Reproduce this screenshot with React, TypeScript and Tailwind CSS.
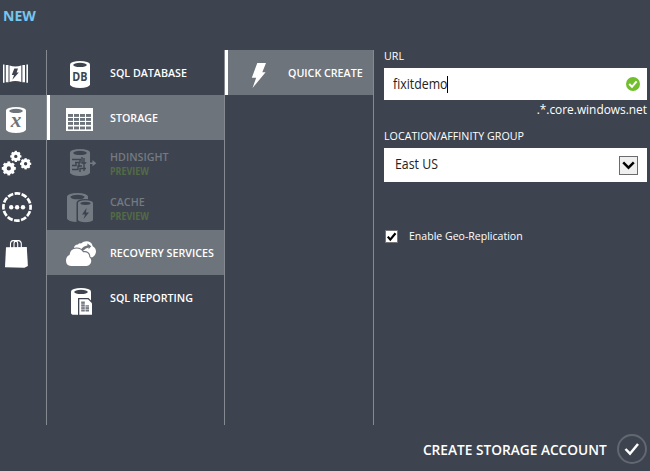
import React from "react";

const BG = "#3e444f";
const HI = "#6e747c";

type CylinderProps = { x: number; y: number; w: number; h: number; fill: string; hole: string };

function Cylinder({ x, y, w, h, fill, hole }: CylinderProps) {
  const r = w / 2;
  const e = w * 0.17;
  return (
    <>
      <path
        d={`M${x} ${y + e}A${r} ${e} 0 0 1 ${x + w} ${y + e}V${y + h - e}A${r} ${e} 0 0 1 ${x} ${y + h - e}Z`}
        fill={fill}
      />
      <ellipse cx={x + r} cy={y + e + 0.5} rx={r * 0.68} ry={e * 0.62} fill={hole} />
    </>
  );
}

function Gear({ cx, cy, r }: { cx: number; cy: number; r: number }) {
  return (
    <>
      <circle cx={cx} cy={cy} r={r * 0.57} fill="none" stroke="white" strokeWidth={r * 0.54} />
      {[0, 45, 90, 135, 180, 225, 270, 315].map((a) => (
        <rect
          key={a}
          x={cx - r * 0.2}
          y={cy - r}
          width={r * 0.4}
          height={r * 0.4}
          fill="white"
          transform={`rotate(${a} ${cx} ${cy})`}
        />
      ))}
    </>
  );
}

function RailIcon({ top, children }: { top: number; children: React.ReactNode }) {
  return (
    <svg className="block h-[45px] w-[46px]" viewBox={`0 ${top} 46 45`}>
      {children}
    </svg>
  );
}

function Rail() {
  return (
    <nav className="flex h-[375px] w-[47px] shrink-0 flex-col border-r border-[#858a91]">
      <RailIcon top={50}>
        <path d="M3 64.5h1.5v18.3H3zM5.8 65h2.7v17.3H5.8zM22.4 65H25v17.3h-2.6zM26.4 64.5H28v18.3h-1.6z" fill="white" />
        <path d="M9.5 65.5Q15.4 67.5 21.3 65.5V82Q15.4 80 9.5 82Z" fill="white" />
        <path d="M14.3 68.5H18L16.6 72.4H18.8L12.4 79.7L14 75H11.8Z" fill={BG} />
      </RailIcon>
      <div className="bg-[#6e747c]">
        <RailIcon top={95}>
          <Cylinder x={6} y={107} w={20} h={26} fill="white" hole={HI} />
          <text x="10.8" y="126.8" textLength="10.6" lengthAdjust="spacingAndGlyphs" fontFamily="Liberation Serif, serif" fontWeight="bold" fontStyle="italic" fontSize="21" fill={HI}>
            x
          </text>
        </RailIcon>
      </div>
      <RailIcon top={140}>
        <Gear cx={8.8} cy={168.4} r={7} />
        <Gear cx={15.8} cy={156.4} r={5.6} />
        <Gear cx={25.6} cy={163.8} r={5.6} />
      </RailIcon>
      <RailIcon top={185}>
        <circle cx="17" cy="207" r="13.6" fill="none" stroke="white" strokeWidth="2.7" strokeDasharray="5.7 1.42" strokeDashoffset="2.85" />
        <circle cx="11.2" cy="207.2" r="2.2" fill="white" />
        <circle cx="17.1" cy="207.2" r="2.2" fill="white" />
        <circle cx="23" cy="207.2" r="2.2" fill="white" />
      </RailIcon>
      <RailIcon top={230}>
        <path d="M6 247.3L26.8 247L27.9 266L24.5 267.8L5 267.2Z" fill="white" />
        <path d="M10.5 248V243.5Q10.7 240.7 13 240.6H15.5Q17.5 241 17.7 243.5V248M14 248V243.5Q14.3 240.8 16.4 240.6H18.5Q21 240.7 21.3 243.5V248" fill="none" stroke="white" strokeWidth="1.1" />
      </RailIcon>
    </nav>
  );
}

type ItemProps = { top: number; icon: React.ReactNode; label: string; active?: boolean; bar?: boolean; preview?: boolean };

function Item({ top, icon, label, active, bar, preview }: ItemProps) {
  return (
    <li className={`flex h-[45px] ${active ? "bg-[#6e747c]" : ""} ${preview ? "text-[#747a82]" : "text-white"}`}>
      <div className={`w-[3px] shrink-0 ${bar ? "bg-white" : ""}`} />
      <svg className="block h-[45px] w-[60px] shrink-0" viewBox={`50 ${top} 60 45`}>
        {icon}
      </svg>
      <div className={`flex flex-col whitespace-nowrap text-[11.5px] leading-[15px] font-semibold ${preview ? "pt-[9px]" : "pt-[15px]"}`}>
        <span className="origin-left scale-x-[0.93]">{label}</span>
        {preview && <span className="origin-left scale-x-[0.89] text-[10px] leading-[14px] font-bold text-[#526b46]">PREVIEW</span>}
      </div>
    </li>
  );
}

const GREY = "#747a82";

const dbIcon = (
  <>
    <Cylinder x={70} y={61} w={20} h={27} fill="white" hole={BG} />
    <text x="72.2" y="81" textLength="15.2" lengthAdjust="spacingAndGlyphs" fontSize="11.5" fontWeight="bold" fill={BG}>
      DB
    </text>
  </>
);

const tableIcon = (
  <>
    <path d="M66 108h27v23H66z" fill="white" />
    {[114, 118, 122, 126.5].map((y) =>
      [68, 74, 80, 86].map((x) => <rect key={`${x}-${y}`} x={x} y={y} width="5" height="2.9" fill={HI} />),
    )}
  </>
);

const insightIcon = (
  <>
    <Cylinder x={70} y={149} w={20} h={27} fill={GREY} hole={BG} />
    <path d="M72 159.5H81M75 162.5H80V159M72 165.5H76V162.5M72 169.5H78V166H82M80 172V168.5H86M82 157V163H87M84 158V171M79 163V167" fill="none" stroke={BG} strokeWidth="1.4" />
    <path d="M86 162.4H92.5V160L96.3 163.2L92.5 166.3V164H86Z" fill={GREY} />
  </>
);

const cacheIcon = (
  <>
    <Cylinder x={67} y={193} w={21} h={29} fill={GREY} hole={BG} />
    <path d="M76.5 223V202.5Q77 199 85 199Q94 199 94 202.5V223Z" fill={BG} />
    <Cylinder x={78} y={200.3} w={15} h={22} fill={GREY} hole={BG} />
    <path d="M86.5 208L82 214.5H85L83.5 219.3L89 212.4H86Z" fill={BG} />
  </>
);

const cloudIcon = (
  <>
    <path d="M74 249Q73.5 244.8 78 244.4Q79 243 81 243.4Q84 240.6 88.5 241.4Q92.2 242.4 92.7 246.3Q96 248 96 251.8Q95.7 255.4 92.5 257.2L84 258Z" fill="white" />
    <path d="M81 249.4Q83.3 246 87.4 245.5V243.6L91.2 246.3L88.6 249.3V247.5Q85.6 248 83.6 250.4Z" fill={HI} />
    <path d="M71 266.1Q66 265.7 66 260.6Q66.2 256.3 69.5 255.1Q70 248.8 76.5 248.5Q81.3 248.6 83.1 252.3Q89.2 251.5 89.3 257Q91.6 258.8 91.2 261.6Q90.6 265.5 86.6 266.1Z" fill="white" stroke={HI} strokeWidth="2.2" paintOrder="stroke" />
  </>
);

const reportIcon = (
  <>
    <Cylinder x={71} y={288} w={20} h={26.5} fill="white" hole={BG} />
    <path d="M71 305H80V314.7H72.5Q71 314.4 71 313Z" fill="white" />
    <path d="M78 298H88.5L93 302.5V316H78Z" fill={BG} />
    <path d="M79.3 299.3H88L92 303.3V314.7H79.3Z" fill="white" />
    <path d="M81.2 301.5H84.8V311.5H81.2zM85.5 305.2H89V311.5H85.5z" fill="#737881" />
    <path d="M81 304.2H89.5M81 306.8H89.5M81 309.4H89.5" stroke="white" strokeWidth=".5" />
  </>
);

export default function App() {
  return (
    <main className="flex h-[471px] w-[650px] flex-col overflow-hidden bg-[#3e444f] font-['Open_Sans','Noto_Sans',sans-serif] text-white">
      <h1 className="h-[50px] pt-[7px] pl-[3px] text-[14px] leading-[18px] font-bold text-[#75c7ef]">NEW</h1>
      <div className="flex h-[375px]">
        <Rail />
        <ul className="w-[178px] shrink-0 border-r border-[#858a91]">
          <Item top={50} icon={dbIcon} label="SQL DATABASE" />
          <Item top={95} icon={tableIcon} label="STORAGE" active bar />
          <Item top={140} icon={insightIcon} label="HDINSIGHT" preview />
          <Item top={185} icon={cacheIcon} label="CACHE" preview />
          <Item top={230} icon={cloudIcon} label="RECOVERY SERVICES" active />
          <Item top={275} icon={reportIcon} label="SQL REPORTING" />
        </ul>
        <section className="w-[149px] shrink-0 border-r border-[#858a91]">
          <div className="flex h-[45px] bg-[#6e747c]">
            <div className="w-[3px] shrink-0 bg-white" />
            <svg className="block h-[45px] w-[60px] shrink-0" viewBox="228 50 60 45">
              <path d="M257.3 63H266L262.3 72.3H265.6L252.5 88L256.2 77.7H251.8Z" fill="white" />
            </svg>
            <span className="origin-left scale-x-[0.93] pt-[15px] text-[11.5px] leading-[15px] font-semibold whitespace-nowrap">QUICK CREATE</span>
          </div>
        </section>
        <form className="ml-[10px] flex w-[263px] flex-col">
          <label className="h-[18px] origin-left scale-x-[0.93] text-[11.5px] leading-[12px]">URL</label>
          <div className="flex h-8 items-center justify-between bg-white pr-[7px] pl-[9px] text-[#222]">
            <div className="flex items-center">
              <span className="block w-[54px] origin-left scale-x-[0.88] text-[14px] leading-[18px] whitespace-nowrap">fixitdemo</span>
              <span className="h-[17px] w-px bg-black" />
            </div>
            <svg className="h-[14px] w-[14px]" viewBox="0 0 14 14">
              <circle cx="7" cy="7" r="7" fill="#72bf2d" />
              <path d="M3.2 7L6 9.8L10.6 4.4" fill="none" stroke="white" strokeWidth="2" />
            </svg>
          </div>
          <div className="h-[30px] origin-right scale-x-[0.88] pt-px text-right text-[13.5px] leading-[17px]">.*.core.windows.net</div>
          <label className="h-[18px] origin-left scale-x-[0.93] text-[11.5px] leading-[12px]">LOCATION/AFFINITY GROUP</label>
          <div className="flex h-[34px] items-center justify-between bg-white pr-[9px] pl-[11px] text-[#222]">
            <span className="mb-[2px] origin-left scale-x-[0.88] text-[14px] leading-[18px]">East US</span>
            <span className="flex h-[19px] w-[19px] items-center justify-center border border-[#6b6b6b] bg-[#efefef]">
              <svg className="h-[9px] w-[13px]" viewBox="0 0 13 9">
                <path d="M1.2 1.3L6.5 6.7L11.8 1.3" fill="none" stroke="black" strokeWidth="2.4" />
              </svg>
            </span>
          </div>
          <label className="mt-[46px] flex h-4 items-center pl-[1px]">
            <svg className="h-[13px] w-[13px]" viewBox="0 0 13 13">
              <path d="M.5.5h12v12H.5z" fill="white" stroke="#777" />
              <path d="M2.8 6.6L5.3 9.6L10.5 3.2" fill="none" stroke="black" strokeWidth="2.2" />
            </svg>
            <span className="ml-[11px] origin-left scale-x-[0.917] text-[11.5px]">Enable Geo-Replication</span>
          </label>
        </form>
      </div>
      <footer className="flex h-[46px] items-center justify-end gap-[10px] pt-[2px] pr-[3px]">
        <span className="origin-right scale-x-[0.944] pt-[2px] text-[14.5px] leading-[20px] font-semibold">CREATE STORAGE ACCOUNT</span>
        <svg className="h-[30px] w-[30px]" viewBox="0 0 30 30">
          <circle cx="15" cy="15" r="14" fill="none" stroke="#626771" strokeWidth="2" />
          <path d="M8.5 15L13 19.7L21 10" fill="none" stroke="white" strokeWidth="2.5" />
        </svg>
      </footer>
    </main>
  );
}
